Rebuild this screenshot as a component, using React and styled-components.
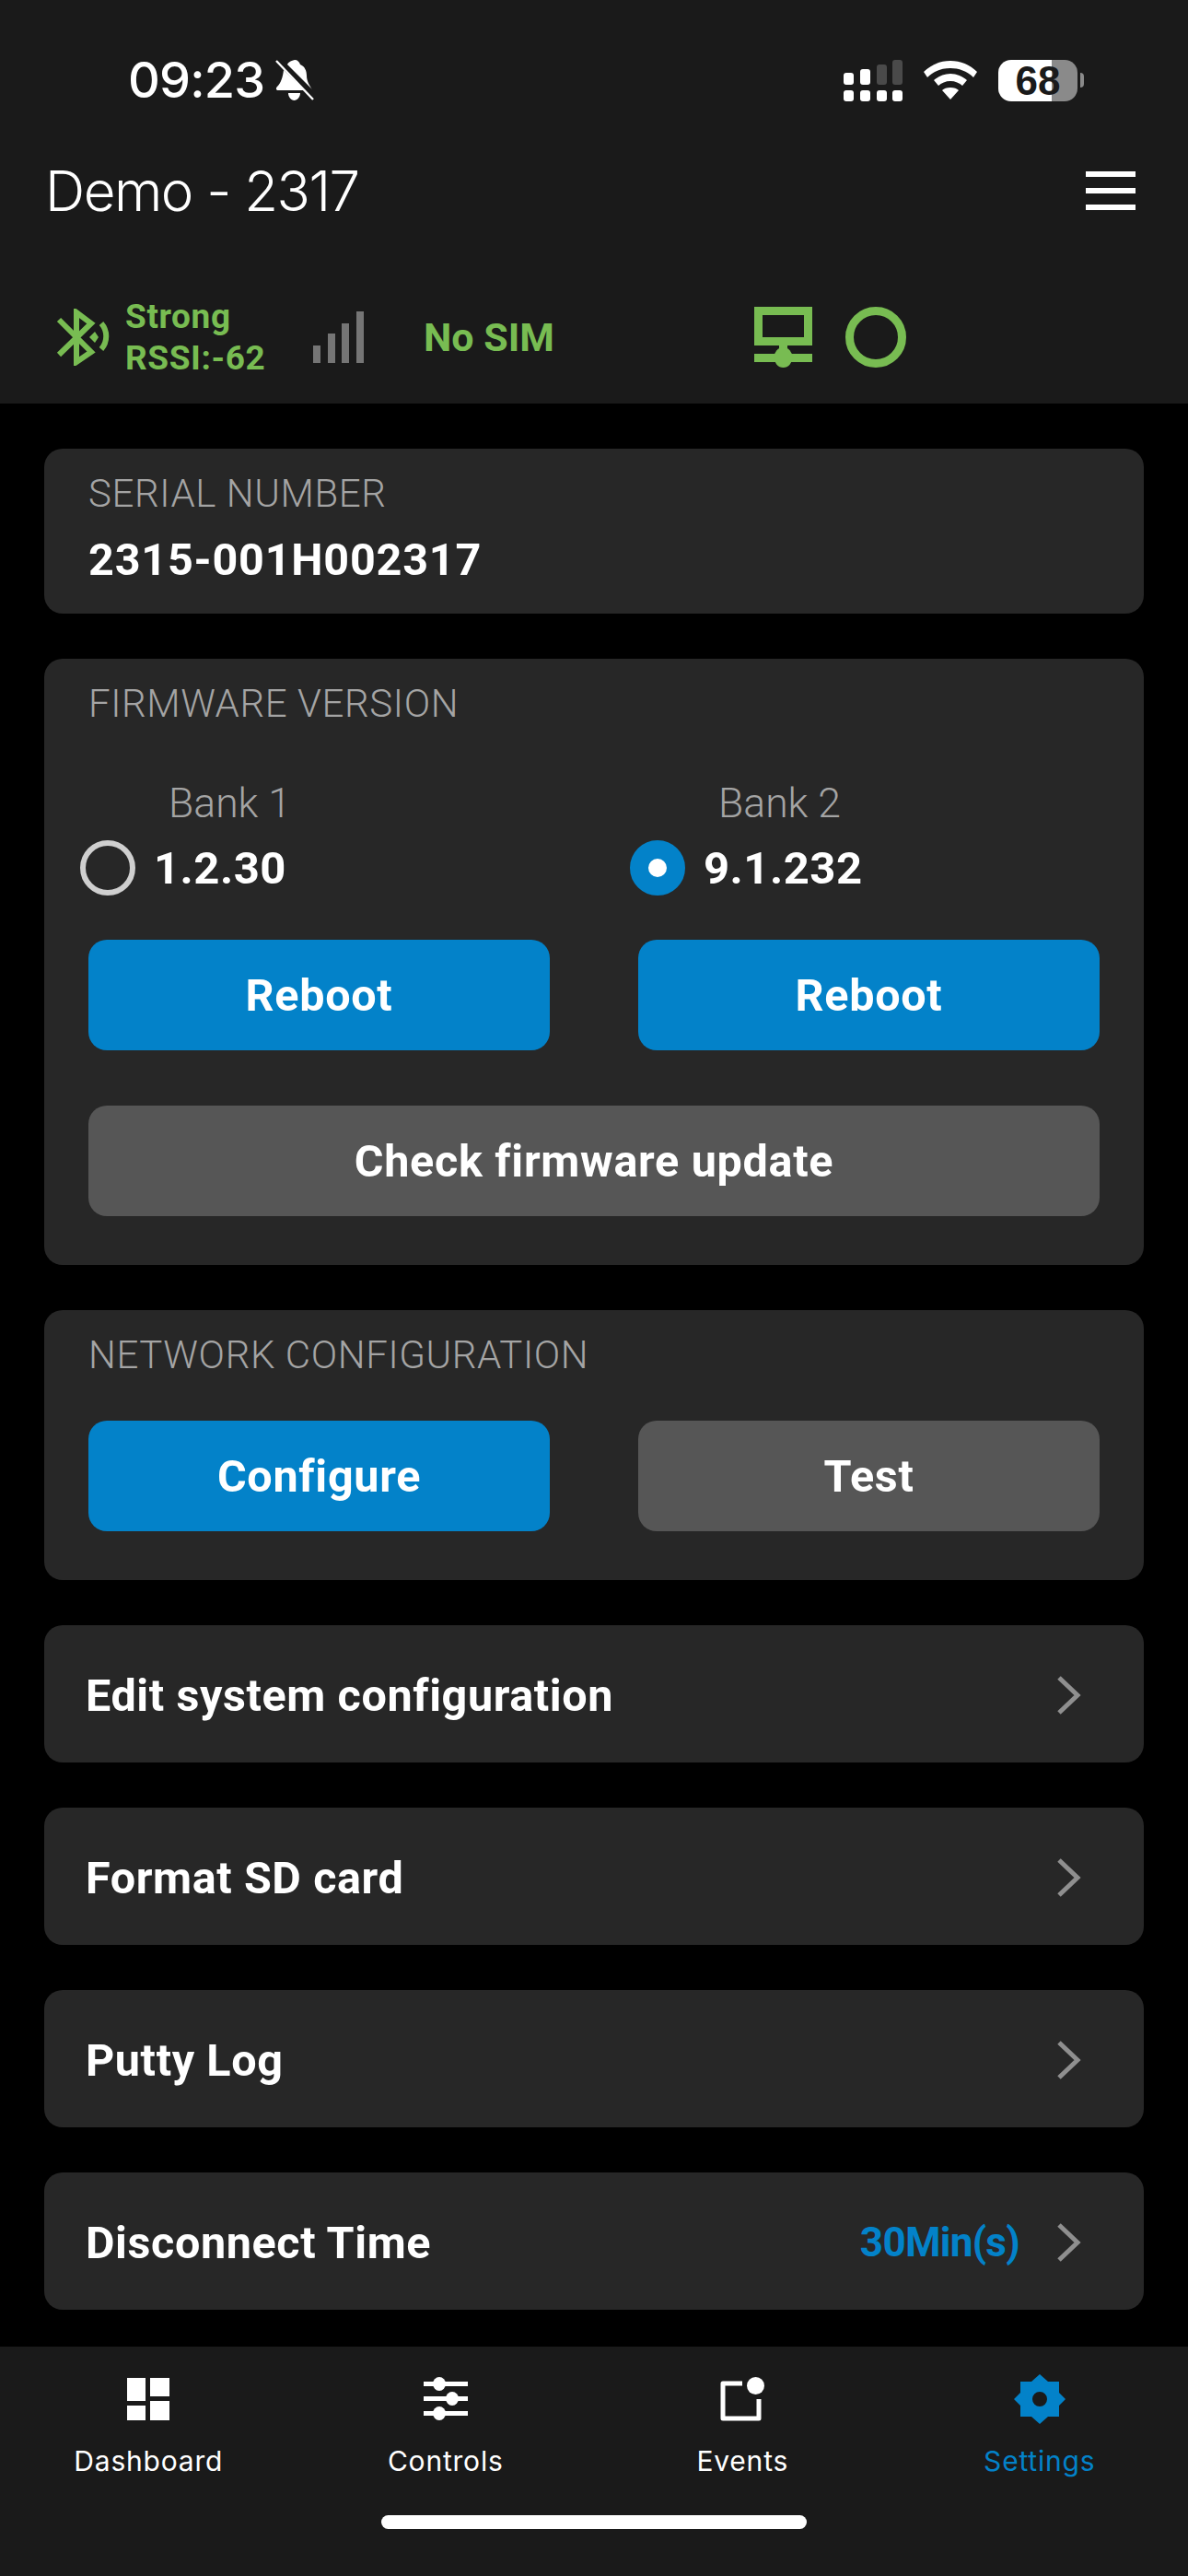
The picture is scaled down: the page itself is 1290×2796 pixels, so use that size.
import styled, { createGlobalStyle } from 'styled-components';

const Global = createGlobalStyle`
  html, body { margin: 0; padding: 0; background: #000; }
  * { box-sizing: border-box; }
`;

const green = '#78bc52';
const blue = '#0382c9';
const bar = '#1a1a1a';
const face = '"Roboto", "Liberation Sans", sans-serif';

const Page = styled.div`
  width: 1290px;
  height: 2796px;
  display: flex;
  flex-direction: column;
  background: #000;
  font-family: ${face};
  overflow: hidden;
`;
const Header = styled.header`
  height: 438px;
  background: ${bar};
  display: flex;
  flex-direction: column;
`;
const StatusBar = styled.div`
  height: 64px;
  margin-top: 55px;
  padding: 0 113px 0 139px;
  display: flex;
  align-items: center;
  justify-content: space-between;
`;
const Clock = styled.div`
  display: flex;
  align-items: center;
  gap: 12px;
  color: #fff;
  font: 500 54px/1 'Inter', sans-serif;
  letter-spacing: -0.8px;
`;
const Tray = styled.div`
  display: flex;
  align-items: center;
  gap: 23px;
`;
const Battery = styled.div`
  display: flex;
  align-items: center;
  gap: 3px;
`;
const BatteryBody = styled.div`
  width: 86px;
  height: 45px;
  border-radius: 14px;
  background: linear-gradient(90deg, #fff 67%, #8a8a8a 67%);
  color: ${bar};
  font: 700 44px/46px 'Liberation Sans', sans-serif;
  text-align: center;
`;
const BatteryTip = styled.div`
  width: 4px;
  height: 16px;
  border-radius: 0 4px 4px 0;
  background: #8a8a8a;
`;
const TitleBar = styled.div`
  height: 108px;
  margin-top: 34px;
  padding: 0 57px 0 49px;
  display: flex;
  align-items: center;
  justify-content: space-between;
`;
const Title = styled.h1`
  margin: 0;
  color: #fff;
  font: 300 60px/1 'Inter', sans-serif;
  letter-spacing: -1.5px;
`;
const Burger = styled.div`
  width: 54px;
  display: flex;
  flex-direction: column;
  gap: 12px;
`;
const BurgerLine = styled.span`
  display: block;
  height: 6px;
  background: #fff;
`;
const ConnRow = styled.div`
  flex: 1;
  padding: 33px 0 0 61px;
  display: flex;
  align-items: center;
`;
const Signal = styled.div`
  display: flex;
  flex-direction: column;
  color: ${green};
  font-weight: 700;
  font-size: 37px;
  line-height: 45px;
  letter-spacing: 0.6px;
  margin-left: 17px;
  width: 152px;
`;
const Sim = styled.div`
  color: ${green};
  font-weight: 700;
  font-size: 43px;
  margin-left: 64px;
  width: 359px;
`;
const CircleMark = styled.div`
  width: 66px;
  height: 66px;
  margin-left: 36px;
  border-radius: 50%;
  border: 9px solid ${green};
`;
const BarsSvg = styled.svg`
  margin-left: 52px;
`;
const Main = styled.main`
  flex: 1;
  padding: 49px 48px 0;
  display: flex;
  flex-direction: column;
  gap: 49px;
`;
const Card = styled.section`
  background: #272727;
  border-radius: 20px;
  padding: 26px 48px 0;
  height: ${(p) => p.$h}px;
`;
const CardLabel = styled.div`
  color: #a4a4a4;
  font-weight: 300;
  font-size: 42px;
  line-height: 46px;
  letter-spacing: 0.6px;
`;
const Serial = styled.div`
  color: #fff;
  font-weight: 700;
  font-size: 48.5px;
  line-height: 56px;
  letter-spacing: 0.8px;
  margin-top: 21px;
`;
const TwoCols = styled.div`
  display: grid;
  grid-template-columns: 501px 501px;
  justify-content: space-between;
  margin-top: ${(p) => p.$top}px;
`;
const Bank = styled.div`
  display: flex;
  flex-direction: column;
`;
const BankName = styled.div`
  color: #a4a4a4;
  font-weight: 300;
  font-size: 44.5px;
  line-height: 46px;
  padding-left: 87px;
`;
const BankValue = styled.div`
  margin-top: 17px;
  margin-left: -9px;
  display: flex;
  align-items: center;
  gap: 20px;
  color: #fff;
  font-weight: 700;
  font-size: 49px;
  letter-spacing: 0.5px;
`;
const Radio = styled.span`
  width: 60px;
  height: 60px;
  border-radius: 50%;
  border: ${(p) => (p.$on ? `20px solid ${blue}` : '6px solid #cfcfcf')};
  background: ${(p) => (p.$on ? '#fff' : 'transparent')};
`;
const Btn = styled.button`
  display: block;
  width: 100%;
  height: 120px;
  border: 0;
  padding: 0;
  border-radius: 20px;
  background: ${(p) => (p.$grey ? '#565656' : blue)};
  color: #fff;
  font-family: ${face};
  font-weight: 700;
  font-size: 48.5px;
  letter-spacing: 0.7px;
`;
const Wide = styled.div`
  margin-top: ${(p) => p.$top}px;
`;
const Row = styled.div`
  height: 149px;
  background: #272727;
  border-radius: 20px;
  padding: 3px 67px 0 45px;
  display: flex;
  align-items: center;
  color: #fff;
  font-weight: 700;
  font-size: 48.5px;
  letter-spacing: 0.6px;
`;
const RowValue = styled.span`
  margin-left: auto;
  margin-right: 40px;
  color: ${blue};
  font-size: 44px;
  letter-spacing: -0.7px;
`;
const Chevron = styled.svg`
  width: 28px;
  height: 44px;
  margin-left: ${(p) => (p.$auto ? 'auto' : '0')};
`;
const Nav = styled.nav`
  height: 249px;
  background: ${bar};
  display: flex;
  flex-direction: column;
  padding-top: 30px;
`;
const Tabs = styled.div`
  display: grid;
  grid-template-columns: repeat(4, 1fr);
`;
const Tab = styled.div`
  display: flex;
  flex-direction: column;
  align-items: center;
  color: ${(p) => (p.$active ? blue : '#fff')};
  font: 400 30px/36px 'Inter', sans-serif;
  letter-spacing: 0.8px;
`;
const TabIcon = styled.div`
  height: 54px;
  display: flex;
  align-items: center;
  justify-content: center;
  margin-bottom: 22px;
`;
const HomeBar = styled.div`
  width: 462px;
  height: 15px;
  margin: 41px auto 0;
  border-radius: 8px;
  background: #fff;
`;

const BellOff = () => (
  <svg width="42" height="46" viewBox="0 0 42 46">
    <path fill="#fff" d="M21 1c3 0 5 2 6 5 5 2 7 7 7 12 0 6 3 11 6 15l-27-27c1-2 3-4 8-5zM9 12l22 22H3c-2 0-3-2-1-4 4-4 6-10 7-18zM14 37h13c0 4-3 8-6.500 8S14 41 14 37z" />
    <path stroke="#fff" strokeWidth="2.400" d="M1 2l40 42" />
    <path stroke={bar} strokeWidth="2.400" d="M4 0l39 41" />
  </svg>
);
const Cell = () => (
  <svg width="64" height="45" viewBox="0 0 64 45">
    <rect x="0" y="14" width="11" height="13" rx="3" fill="#fff" />
    <rect x="18" y="10" width="11" height="17" rx="3" fill="#fff" />
    <rect x="36" y="5" width="11" height="22" rx="3" fill="#4a4a4a" />
    <rect x="53" y="0" width="11" height="27" rx="3" fill="#4a4a4a" />
    {[0, 18, 36, 53].map((x) => (
      <rect key={x} x={x} y="33" width="11" height="12" rx="3" fill="#fff" />
    ))}
  </svg>
);
const Wifi = () => (
  <svg width="58" height="42" viewBox="0 0 58 42">
    <path fill="#fff" d="M29 0c11 0 21 4 29 12l-4 6C47 11 38 8 29 8S11 11 4 18L0 12C8 4 18 0 29 0z" />
    <path fill="#fff" d="M29 14c7 0 13 3 18 7l-5 6c-3-3-8-5-13-5s-10 2-13 5l-5-6c5-4 11-7 18-7z" />
    <path fill="#fff" d="M29 29c4 0 7 1 9 3L29 42 20 32c2-2 5-3 9-3z" />
  </svg>
);
const BluetoothWaves = () => (
  <svg width="58" height="62" viewBox="0 0 58 62" fill="none" stroke={green}>
    <path strokeWidth="6" d="M3 12l35 35-16 11V4l16 12L3 50" />
    <path fill={green} stroke="none" d="M36 31l6-6 4 6-4 6z" />
    <path strokeWidth="6" d="M49 16c7 8 7 20 0 28" />
  </svg>
);
const GreyBars = () => (
  <BarsSvg width="56" height="56" viewBox="0 0 56 56">
    <rect x="0" y="37" width="8" height="19" fill="#757575" />
    <rect x="16" y="24" width="8" height="32" fill="#757575" />
    <rect x="31" y="13" width="8" height="43" fill="#757575" />
    <rect x="47" y="0" width="8" height="56" fill="#757575" />
  </BarsSvg>
);
const NetworkMark = () => (
  <svg width="63" height="66" viewBox="0 0 63 66" fill={green}>
    <path fillRule="evenodd" d="M0 0h63v42H0zM9 9v24h45V9z" />
    <rect x="27" y="42" width="9" height="10" />
    <rect x="0" y="51" width="63" height="9" />
    <ellipse cx="31.500" cy="55" rx="10" ry="11" />
  </svg>
);
const DashIcon = () => (
  <svg width="46" height="46" viewBox="0 0 46 46" fill="#fff">
    <rect x="0" y="0" width="20" height="25" />
    <rect x="25" y="0" width="21" height="20" />
    <rect x="25" y="25" width="21" height="21" />
    <rect x="0" y="30" width="20" height="16" />
  </svg>
);
const SliderIcon = () => (
  <svg width="48" height="48" viewBox="0 0 48 48" fill="#fff">
    <rect x="0" y="5" width="48" height="5" />
    <rect x="0" y="21" width="48" height="5" />
    <rect x="0" y="37" width="48" height="5" />
    <ellipse cx="17" cy="7.500" rx="7" ry="7.500" />
    <ellipse cx="31" cy="23.500" rx="7" ry="7.500" />
    <ellipse cx="17" cy="39.500" rx="7" ry="7.500" />
  </svg>
);
const EventIcon = () => (
  <svg width="48" height="48" viewBox="0 0 48 48" fill="none">
    <path stroke="#fff" strokeWidth="5" strokeLinejoin="round" d="M24 7H3v38h39V24" />
    <ellipse cx="38.500" cy="9.500" rx="9.500" ry="9.500" fill="#fff" />
  </svg>
);
const GearIcon = () => (
  <svg width="56" height="54" viewBox="0 0 56 54">
    <path fillRule="evenodd" fill={blue} d="M28 0l9 8h12v12l7 7-7 7v12H37l-9 8-9-8H7V34l-7-7 7-7V8h12zM28 19a8 8 0 1 0 0 16 8 8 0 0 0 0-16z" />
  </svg>
);
const ChevronIcon = ({ auto }) => (
  <Chevron $auto={auto} viewBox="0 0 28 44" fill="none">
    <path stroke="#8f8f8f" strokeWidth="5" d="M3 3l20 19L3 41" />
  </Chevron>
);

const rows = [
  { name: 'Edit system configuration' },
  { name: 'Format SD card' },
  { name: 'Putty Log' },
  { name: 'Disconnect Time', value: '30Min(s)' },
];
const tabs = [
  { name: 'Dashboard', icon: <DashIcon /> },
  { name: 'Controls', icon: <SliderIcon /> },
  { name: 'Events', icon: <EventIcon /> },
  { name: 'Settings', icon: <GearIcon />, active: true },
];

const App = () => {
  return (
    <Page>
      <Global />
      <Header>
        <StatusBar>
          <Clock>
            09:23
            <BellOff />
          </Clock>
          <Tray>
            <Cell />
            <Wifi />
            <Battery>
              <BatteryBody>68</BatteryBody>
              <BatteryTip />
            </Battery>
          </Tray>
        </StatusBar>
        <TitleBar>
          <Title>Demo - 2317</Title>
          <Burger>
            <BurgerLine />
            <BurgerLine />
            <BurgerLine />
          </Burger>
        </TitleBar>
        <ConnRow>
          <BluetoothWaves />
          <Signal>
            <span>Strong</span>
            <span>RSSI:-62</span>
          </Signal>
          <GreyBars />
          <Sim>No SIM</Sim>
          <NetworkMark />
          <CircleMark />
        </ConnRow>
      </Header>
      <Main>
        <Card $h={179}>
          <CardLabel>SERIAL NUMBER</CardLabel>
          <Serial>2315-001H002317</Serial>
        </Card>
        <Card $h={658}>
          <CardLabel>FIRMWARE VERSION</CardLabel>
          <TwoCols $top={62}>
            <Bank>
              <BankName>Bank 1</BankName>
              <BankValue>
                <Radio />
                1.2.30
              </BankValue>
              <Wide $top={48}>
                <Btn>Reboot</Btn>
              </Wide>
            </Bank>
            <Bank>
              <BankName>Bank 2</BankName>
              <BankValue>
                <Radio $on />
                9.1.232
              </BankValue>
              <Wide $top={48}>
                <Btn>Reboot</Btn>
              </Wide>
            </Bank>
          </TwoCols>
          <Wide $top={60}>
            <Btn $grey>Check firmware update</Btn>
          </Wide>
        </Card>
        <Card $h={293}>
          <CardLabel>NETWORK CONFIGURATION</CardLabel>
          <TwoCols $top={48}>
            <Btn>Configure</Btn>
            <Btn $grey>Test</Btn>
          </TwoCols>
        </Card>
        {rows.map((row) => (
          <Row key={row.name}>
            {row.name}
            {row.value && <RowValue>{row.value}</RowValue>}
            <ChevronIcon auto={!row.value} />
          </Row>
        ))}
      </Main>
      <Nav>
        <Tabs>
          {tabs.map((tab) => (
            <Tab key={tab.name} $active={tab.active}>
              <TabIcon>{tab.icon}</TabIcon>
              {tab.name}
            </Tab>
          ))}
        </Tabs>
        <HomeBar />
      </Nav>
    </Page>
  );
};

export default App;
